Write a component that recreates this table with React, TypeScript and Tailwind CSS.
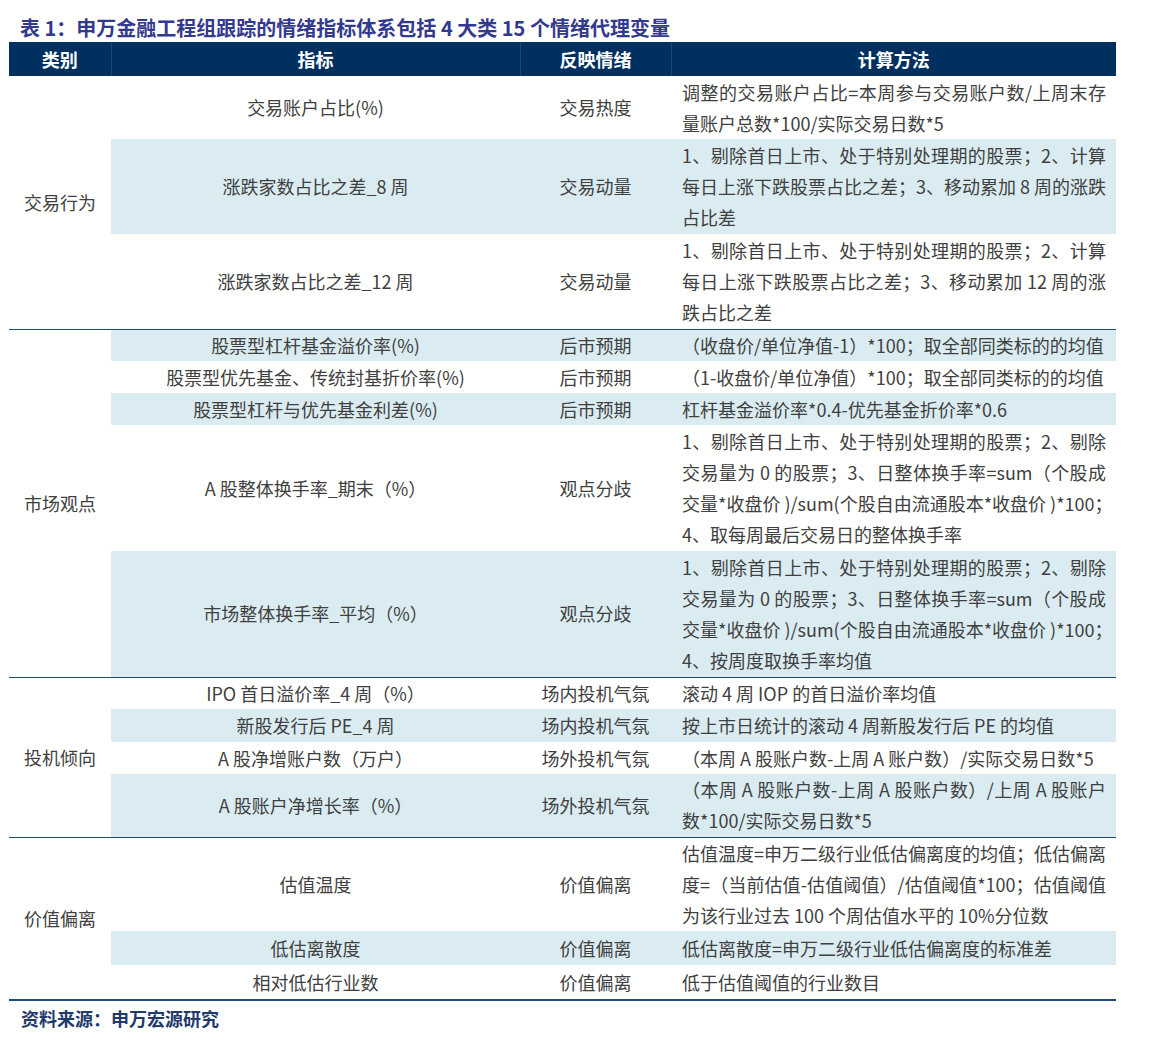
type Row = {
  name: string;
  mood: string;
  lines: string[];
  h: string;
  blue: boolean;
};

type Group = { cat: string; rows: Row[] };

const dup = [
  "1、剔除首日上市、处于特别处理期的股票；2、剔除",
  "交易量为 0 的股票；3、日整体换手率=sum（个股成",
  "交量*收盘价 )/sum(个股自由流通股本*收盘价 )*100；",
];

const groups: Group[] = [
  {
    cat: "交易行为",
    rows: [
      {
        name: "交易账户占比(%)",
        mood: "交易热度",
        lines: ["调整的交易账户占比=本周参与交易账户数/上周末存", "量账户总数*100/实际交易日数*5"],
        h: "h-[63px]",
        blue: false,
      },
      {
        name: "涨跌家数占比之差_8 周",
        mood: "交易动量",
        lines: [
          "1、剔除首日上市、处于特别处理期的股票；2、计算",
          "每日上涨下跌股票占比之差；3、移动累加 8 周的涨跌",
          "占比差",
        ],
        h: "h-[95px]",
        blue: true,
      },
      {
        name: "涨跌家数占比之差_12 周",
        mood: "交易动量",
        lines: [
          "1、剔除首日上市、处于特别处理期的股票；2、计算",
          "每日上涨下跌股票占比之差；3、移动累加 12 周的涨",
          "跌占比之差",
        ],
        h: "h-[95px]",
        blue: false,
      },
    ],
  },
  {
    cat: "市场观点",
    rows: [
      {
        name: "股票型杠杆基金溢价率(%)",
        mood: "后市预期",
        lines: ["（收盘价/单位净值-1）*100；取全部同类标的的均值"],
        h: "h-[32px]",
        blue: true,
      },
      {
        name: "股票型优先基金、传统封基折价率(%)",
        mood: "后市预期",
        lines: ["（1-收盘价/单位净值）*100；取全部同类标的的均值"],
        h: "h-[32px]",
        blue: false,
      },
      {
        name: "股票型杠杆与优先基金利差(%)",
        mood: "后市预期",
        lines: ["杠杆基金溢价率*0.4-优先基金折价率*0.6"],
        h: "h-[32px]",
        blue: true,
      },
      {
        name: "A 股整体换手率_期末（%）",
        mood: "观点分歧",
        lines: [...dup, "4、取每周最后交易日的整体换手率"],
        h: "h-[126px]",
        blue: false,
      },
      {
        name: "市场整体换手率_平均（%）",
        mood: "观点分歧",
        lines: [...dup, "4、按周度取换手率均值"],
        h: "h-[126px]",
        blue: true,
      },
    ],
  },
  {
    cat: "投机倾向",
    rows: [
      {
        name: "IPO 首日溢价率_4 周（%）",
        mood: "场内投机气氛",
        lines: ["滚动 4 周 IOP 的首日溢价率均值"],
        h: "h-[32px]",
        blue: false,
      },
      {
        name: "新股发行后 PE_4 周",
        mood: "场内投机气氛",
        lines: ["按上市日统计的滚动 4 周新股发行后 PE 的均值"],
        h: "h-[33px]",
        blue: true,
      },
      {
        name: "A 股净增账户数（万户）",
        mood: "场外投机气氛",
        lines: ["（本周 A 股账户数-上周 A 账户数）/实际交易日数*5"],
        h: "h-[32px]",
        blue: false,
      },
      {
        name: "A 股账户净增长率（%）",
        mood: "场外投机气氛",
        lines: ["（本周 A 股账户数-上周 A 股账户数）/上周 A 股账户", "数*100/实际交易日数*5"],
        h: "h-[63px]",
        blue: true,
      },
    ],
  },
  {
    cat: "价值偏离",
    rows: [
      {
        name: "估值温度",
        mood: "价值偏离",
        lines: [
          "估值温度=申万二级行业低估偏离度的均值；低估偏离",
          "度=（当前估值-估值阈值）/估值阈值*100；估值阈值",
          "为该行业过去 100 个周估值水平的 10%分位数",
        ],
        h: "h-[94px]",
        blue: false,
      },
      {
        name: "低估离散度",
        mood: "价值偏离",
        lines: ["低估离散度=申万二级行业低估偏离度的标准差"],
        h: "h-[34px]",
        blue: true,
      },
      {
        name: "相对低估行业数",
        mood: "价值偏离",
        lines: ["低于估值阈值的行业数目"],
        h: "h-[35px]",
        blue: false,
      },
    ],
  },
];

export default function App() {
  return (
    <div className="min-h-screen bg-white px-[9px] font-['Noto_Sans_CJK_SC',sans-serif] text-[#404040]">
      {/* Title */}
      <div className="pt-[15px] pl-[11px] text-[20px] font-bold leading-[26px] text-[#33398f]">
        表 1：申万金融工程组跟踪的情绪指标体系包括 4 大类 15 个情绪代理变量
      </div>

      <table className="mt-[1px] w-[1107px] table-fixed border-collapse text-[18px]">
        <colgroup>
          <col className="w-[102px]" />
          <col className="w-[409px]" />
          <col className="w-[151px]" />
          <col className="w-[445px]" />
        </colgroup>
        <thead>
          <tr className="h-[34px] bg-[#00305f] text-white">
            <th className="border-r border-[#1b4775] font-bold">类别</th>
            <th className="border-r border-[#1b4775] font-bold">指标</th>
            <th className="border-r border-[#1b4775] font-bold">反映情绪</th>
            <th className="font-bold">计算方法</th>
          </tr>
        </thead>
        {groups.map((g, gi) => (
          <tbody
            key={g.cat}
            className={gi === groups.length - 1 ? "border-b-2 border-[#1f4b7c]" : "border-b border-[#1f4b7c]"}
          >
            {g.rows.map((r, ri) => {
              const bg = r.blue ? "bg-[#daecf2]" : "bg-white";
              return (
                <tr key={r.name} className={r.h}>
                  {ri === 0 && (
                    <td rowSpan={g.rows.length} className="bg-white text-center">
                      {g.cat}
                    </td>
                  )}
                  <td className={`${bg} text-center`}>{r.name}</td>
                  <td className={`${bg} text-center`}>{r.mood}</td>
                  <td className={`${bg} pl-[11px] pr-[10px] leading-[31px]`}>
                    {r.lines.map((l, li) => (
                      <div
                        key={li}
                        className={
                          li < r.lines.length - 1
                            ? "whitespace-nowrap text-justify [text-align-last:justify]"
                            : "whitespace-nowrap"
                        }
                      >
                        {l}
                      </div>
                    ))}
                  </td>
                </tr>
              );
            })}
          </tbody>
        ))}
      </table>

      {/* Source */}
      <div className="pt-[4px] pl-[12px] text-[18px] font-bold leading-[26px] text-[#1f3a6b]">
        资料来源：申万宏源研究
      </div>
    </div>
  );
}
